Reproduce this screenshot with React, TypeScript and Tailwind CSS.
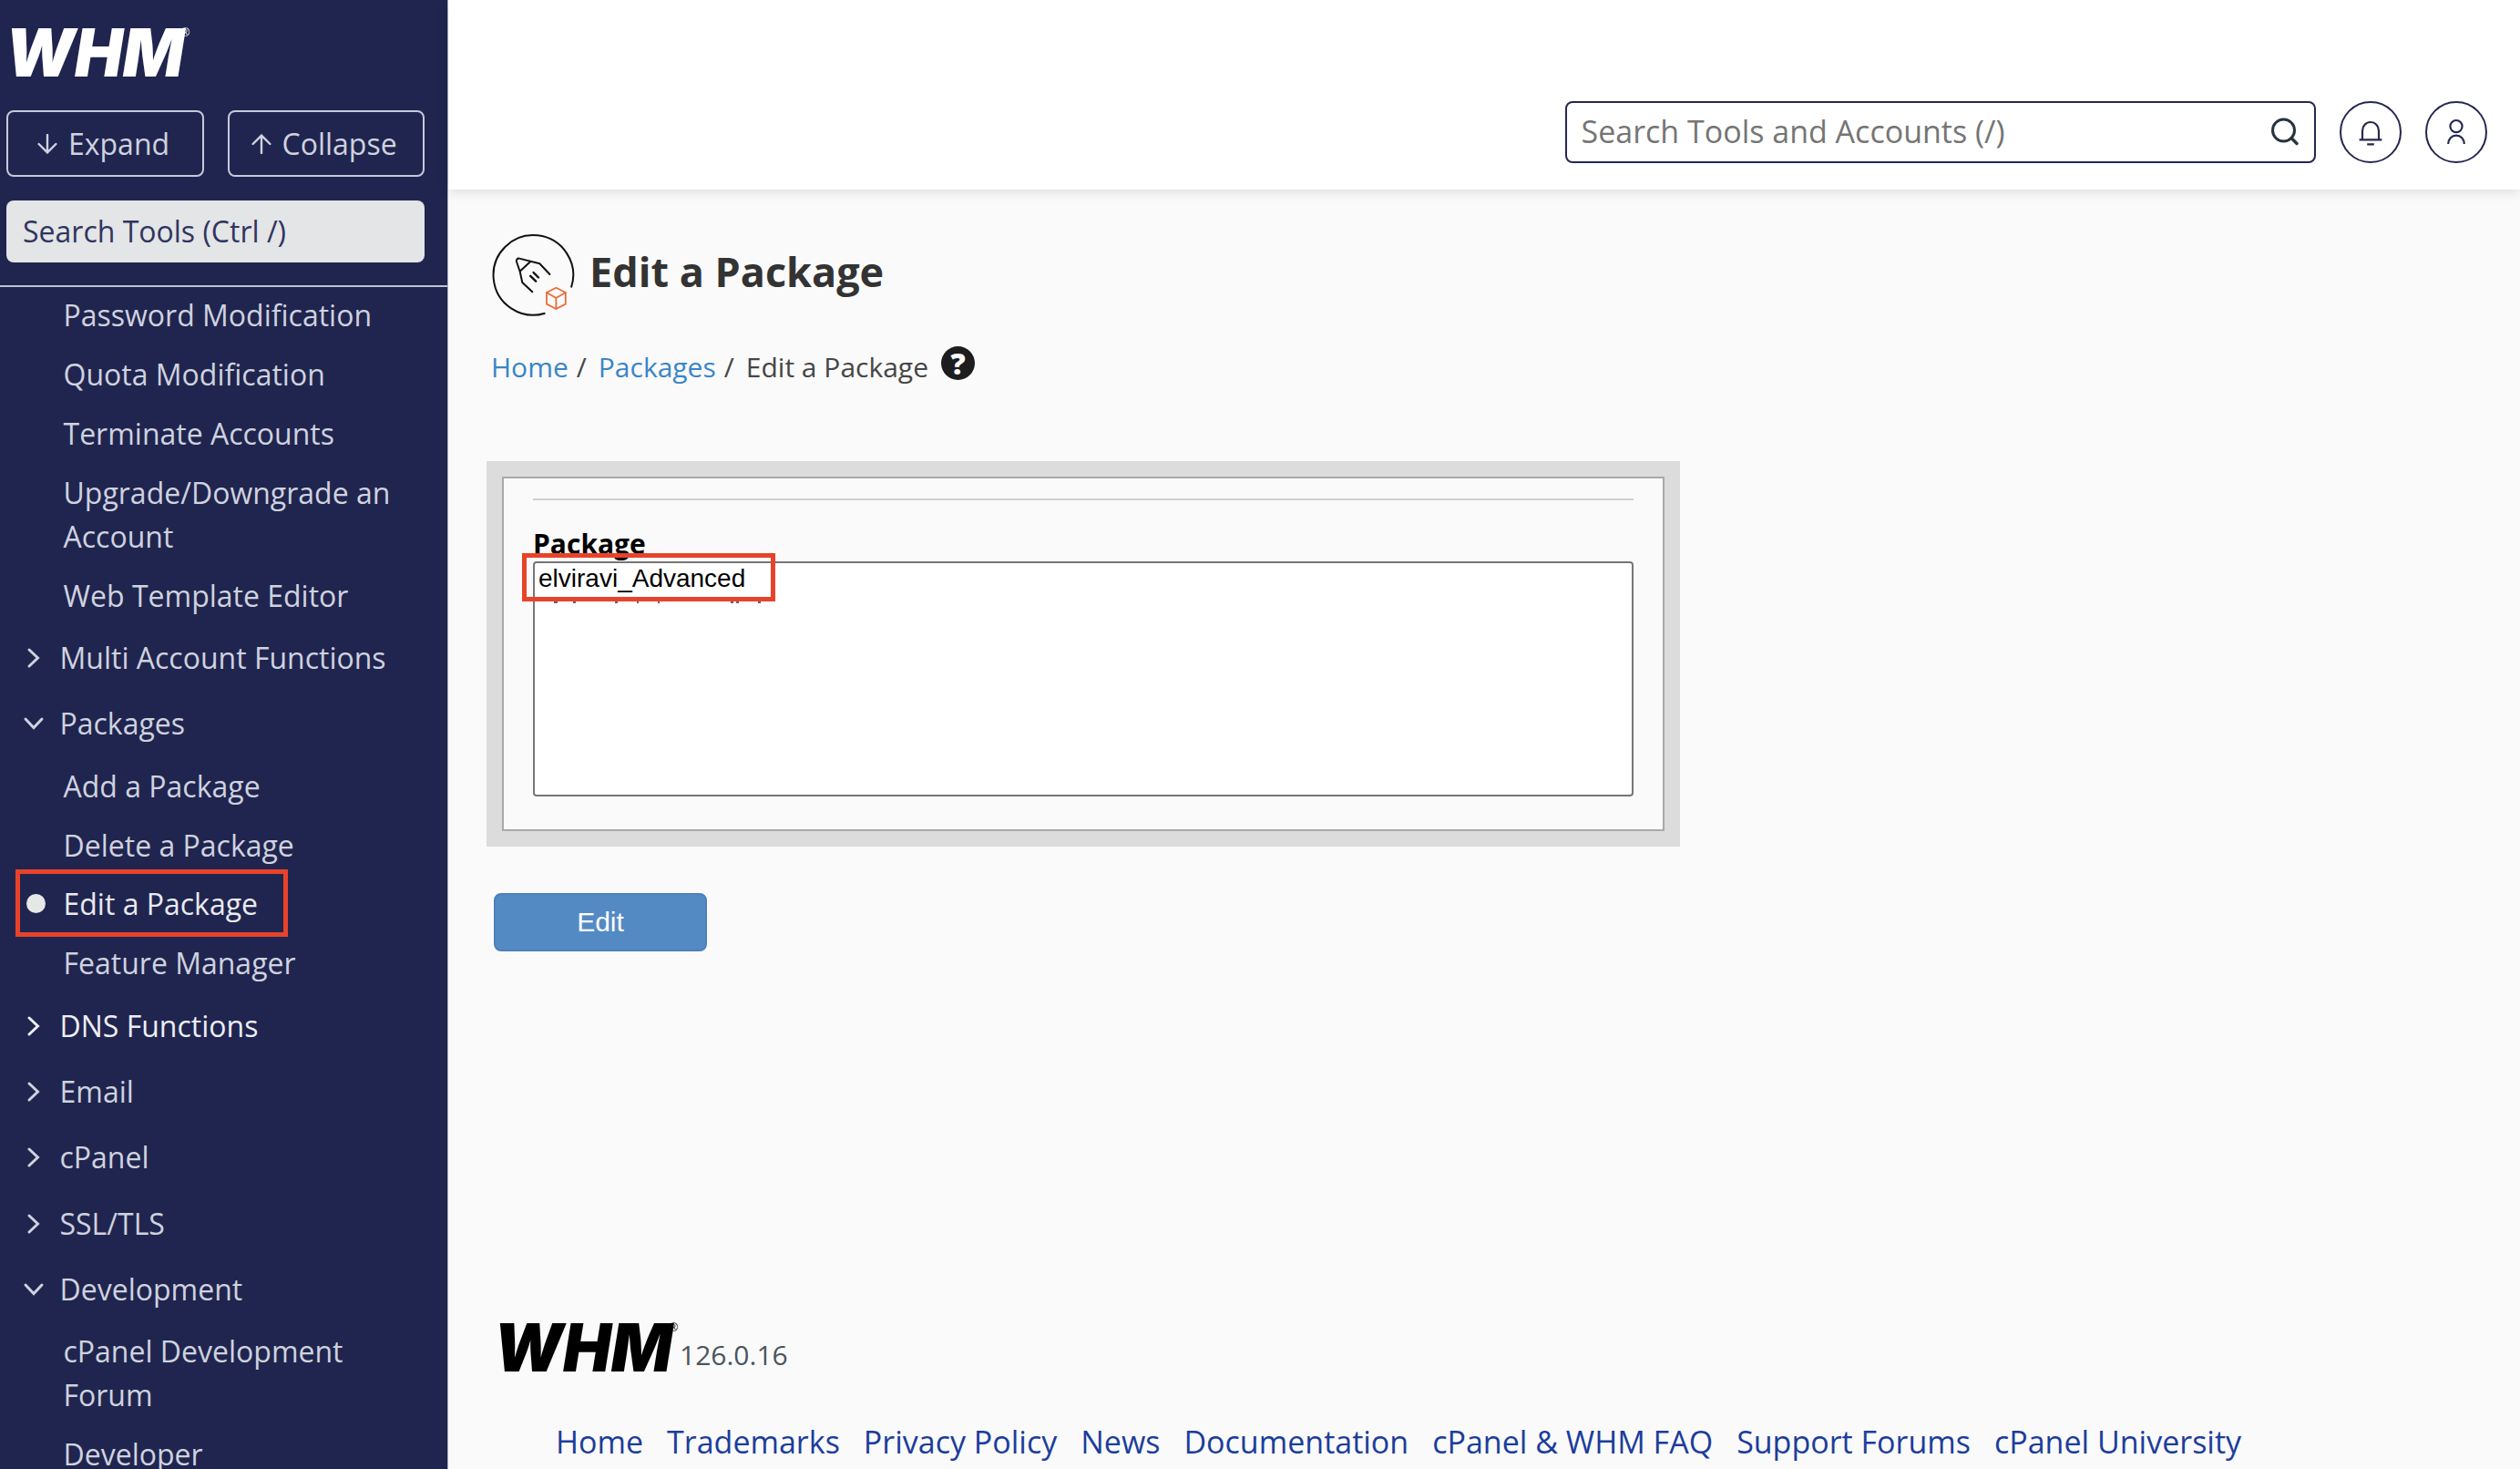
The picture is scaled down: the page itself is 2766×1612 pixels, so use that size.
import React from 'react';

interface NavLink {
  label: string;
  active?: boolean;
}

interface NavGroup {
  label: string;
  open?: boolean;
  highlighted?: boolean;
  items?: NavLink[];
}

const ACCOUNT_LINKS: NavLink[] = [
  { label: 'Password Modification' },
  { label: 'Quota Modification' },
  { label: 'Terminate Accounts' },
  { label: 'Upgrade/Downgrade an Account' },
  { label: 'Web Template Editor' },
];

const NAV_GROUPS: NavGroup[] = [
  { label: 'Multi Account Functions' },
  {
    label: 'Packages',
    open: true,
    items: [
      { label: 'Add a Package' },
      { label: 'Delete a Package' },
      { label: 'Edit a Package', active: true },
      { label: 'Feature Manager' },
    ],
  },
  { label: 'DNS Functions', highlighted: true },
  { label: 'Email' },
  { label: 'cPanel' },
  { label: 'SSL/TLS' },
  {
    label: 'Development',
    open: true,
    items: [{ label: 'cPanel Development Forum' }, { label: 'Developer Documentation' }],
  },
];

const FOOTER_LINKS = [
  'Home',
  'Trademarks',
  'Privacy Policy',
  'News',
  'Documentation',
  'cPanel & WHM FAQ',
  'Support Forums',
  'cPanel University',
];

const Logo: React.FC<{ className: string }> = ({ className }) => (
  <svg width="204" height="56" viewBox="0 0 204 56" className={className} fill="currentColor">
    <text
      x="0"
      y="54.5"
      fontFamily="Inter, sans-serif"
      fontSize="73"
      fontWeight="900"
      fontStyle="italic"
      textLength="196"
      lengthAdjust="spacingAndGlyphs"
    >
      WHM
    </text>
    <text x="192.5" y="11" fontFamily='"Liberation Sans", sans-serif' fontSize="13">
      ®
    </text>
  </svg>
);

const ArrowIcon: React.FC<{ up?: boolean }> = ({ up }) => (
  <svg width="22" height="22" viewBox="0 0 22 22" fill="none" stroke="currentColor" strokeWidth="2.4" strokeLinecap="round">
    {up ? <path d="M11 21V1.6M1.6 11L11 1.6L20.4 11" /> : <path d="M11 1V20.4M1.6 11L11 20.4L20.4 11" />}
  </svg>
);

const Chevron: React.FC<{ open?: boolean }> = ({ open }) => (
  <svg width="24" height="24" viewBox="0 0 24 24" fill="none" stroke="currentColor" strokeWidth="3" strokeLinecap="round">
    {open ? <path d="M3 7L12 16.5L21 7" /> : <path d="M7 3L16.5 12L7 21" />}
  </svg>
);

const PackageIcon = () => (
  <svg width="92" height="92" viewBox="539 256 92 92" fill="none" stroke="#111" strokeWidth="2" strokeLinecap="round" strokeLinejoin="round">
    <path d="M627 315.5A43.8 43.8 0 1 0 598.4 343.7" strokeLinecap="butt" />
    <path d="M603.4 301L592.3 289.3L570 283.6Q566.4 283.4 567 287.2L570.7 298L573.3 310L584.3 320.3" />
    <path d="M582 287.3L570.9 297.5" />
    <path d="M585.5 299L591 304.5M582.2 302.8L588.2 308.6" strokeWidth="2.4" />
    <g stroke="#ee6a3a" strokeWidth="1.8">
      <path d="M610.4 315.8L620.8 321V333.6L610.4 339L600 333.6V321Z" />
      <path d="M600 321L610.4 327L620.8 321M610.4 327V339" />
    </g>
  </svg>
);

const SubLink: React.FC<{ link: NavLink }> = ({ link }) => (
  <li className={`relative py-[8.4px] pr-8 pl-[69.5px] ${link.active ? 'text-[#e9eaf0]' : 'text-[#cfd2df]'}`}>
    {link.active && (
      <>
        <span className="absolute top-[21px] left-[29px] h-[21px] w-[21px] rounded-full bg-[#e6e8e8]" />
        <span className="absolute top-[-6px] left-[17px] h-[74px] w-[299px] border-[5px] border-[#e8432a]" />
      </>
    )}
    <a href="#">{link.label}</a>
  </li>
);

const Sidebar = () => (
  <aside className="flex h-full w-[492px] shrink-0 flex-col border-r border-[#a9abc0] bg-[#20254f] text-[32px] leading-[48px] text-[#cfd2df]">
    <div className="h-[121px] pt-[28.5px] pl-[6px]">
      <Logo className="text-white" />
    </div>
    <div className="flex gap-[26px] px-[7px]">
      <button className="flex h-[73px] w-[216.5px] items-center rounded-lg border-2 border-[#c6c9da] pl-[32px]">
        <ArrowIcon />
        <span className="ml-[12px]">Expand</span>
      </button>
      <button className="flex h-[73px] w-[216.5px] items-center rounded-lg border-2 border-[#c6c9da] pl-[24px]">
        <ArrowIcon up />
        <span className="ml-[12px]">Collapse</span>
      </button>
    </div>
    <div className="mt-[26px] ml-[7px] flex h-[68px] w-[459px] items-center rounded-lg bg-[#e3e5e6] pl-[18px] text-[#30355f]">
      Search Tools (Ctrl /)
    </div>
    <nav className="mt-[25px] min-h-0 flex-1 overflow-hidden border-t-2 border-[#bfc2d4]">
      <ul className="-mt-px">
        {ACCOUNT_LINKS.map((link) => (
          <SubLink key={link.label} link={link} />
        ))}
      </ul>
      {NAV_GROUPS.map((group) => (
        <div key={group.label}>
          <div className={`flex items-center py-[12.15px] pl-[24.5px] ${group.highlighted ? 'text-[#eceef4]' : ''}`}>
            <Chevron open={group.open} />
            <span className="ml-[17px]">{group.label}</span>
          </div>
          {group.items && (
            <ul>
              {group.items.map((link) => (
                <SubLink key={link.label} link={link} />
              ))}
            </ul>
          )}
        </div>
      ))}
    </nav>
  </aside>
);

const Header = () => (
  <header className="z-10 flex h-[208px] shrink-0 items-start justify-end bg-white pt-[110.5px] pr-[36px] text-[#24284f] shadow-[0_2px_12px_rgba(0,0,0,0.13)]">
    <div className="flex h-[68px] w-[824.5px] items-center justify-between rounded-lg border-2 border-[#24284f] pr-[16px] pl-[16px]">
      <span className="text-[34px] text-[#757575]">Search Tools and Accounts (/)</span>
      <svg width="32" height="32" viewBox="0 0 32 32" fill="none" stroke="#27343f" strokeWidth="3" strokeLinecap="round">
        <circle cx="14.5" cy="14" r="12" />
        <path d="M23 22.5L29 28.5" strokeWidth="3.4" />
      </svg>
    </div>
    <button className="ml-[26px] flex h-[68px] w-[68px] items-center justify-center rounded-full border-2 border-[#24284f]">
      <svg width="30" height="30" viewBox="0 0 30 30" fill="none" stroke="currentColor" strokeWidth="2.2">
        <path d="M2.6 23.4H27.4M6 23.4V13.5A9 9.5 0 0 1 24 13.5V23.4M11.2 28.4H18.8" />
      </svg>
    </button>
    <button className="ml-[26px] flex h-[68px] w-[68px] items-center justify-center rounded-full border-2 border-[#24284f]">
      <svg width="30" height="30" viewBox="0 0 30 30" fill="none" stroke="currentColor" strokeWidth="2.2">
        <circle cx="15" cy="8.6" r="6.6" />
        <path d="M6.2 28A8.8 9.4 0 0 1 23.8 28" />
      </svg>
    </button>
  </header>
);

const HelpIcon = () => (
  <span className="flex h-[37px] w-[37px] items-center justify-center rounded-full bg-[#1d1d1f] text-[32px] leading-none font-black text-white">
    ?
  </span>
);

const PackageForm = () => (
  <form className="mt-[71px] -ml-[8px] w-[1310px]">
    <div className="h-[423px] bg-[#dcdcdc] p-[17px]">
      <div className="h-full border-2 border-[#a9a9a9] bg-[#fafafa] px-[32px] pt-[22px]">
        <div className="h-[2px] bg-[#cfcfcf]" />
        <div className="relative mt-[26px] h-[41px] text-[30px] leading-[44px] font-bold text-black">Package</div>
        <div className="relative h-[258px] w-[1208px] rounded border-2 border-[#767676] bg-white pt-px pl-[4px] font-['Liberation_Sans',Arial,sans-serif] text-[28px] leading-[32px] text-black">
          elviravi_Advanced
          <span className="absolute top-[-11px] left-[-14px] h-[53px] w-[278px] border-[5px] border-[#e8432a]" />
          {/* Bottom edge of the row that sits under the selected option */}
          <svg className="absolute top-[42px] left-[20px]" width="230" height="2" viewBox="0 0 230 2" stroke="#333" strokeWidth="1.4">
            <path d="M1 1h4M22 1h3M68 1h3M92 1h2M115 1h2M195 1h3M201 1h3M225 1h3" />
          </svg>
        </div>
      </div>
    </div>
    <button
      type="button"
      className="mt-[51px] ml-[8px] h-[64px] w-[234px] rounded-lg border-2 border-[#4c80b8] bg-[#548ac4] pb-[2px] font-['Liberation_Sans',Arial,sans-serif] text-[30px] text-white"
    >
      Edit
    </button>
  </form>
);

const Footer = () => (
  <footer className="mt-auto pb-px">
    <div className="flex items-end">
      <Logo className="text-black" />
      <span className="text-[30px] leading-[38px] text-[#4a545e]">126.0.16</span>
    </div>
    <div className="mt-[47px] ml-[68px] flex gap-[26px] text-[34px] leading-[58px] whitespace-nowrap text-[#1c3d9c]">
      {FOOTER_LINKS.map((label) => (
        <a key={label} href="#">
          {label}
        </a>
      ))}
    </div>
  </footer>
);

const App: React.FC = () => {
  return (
    <div className="flex h-screen w-screen overflow-hidden bg-[#fafafa] font-['Open_Sans','Noto_Sans',sans-serif]">
      <Sidebar />
      <div className="flex min-w-0 flex-1 flex-col">
        <Header />
        <main className="flex min-h-0 flex-1 flex-col pt-[48px] pl-[50px]">
          <div className="-ml-[3px] flex h-[92px] items-center">
            <PackageIcon />
            <h1 className="ml-[16px] pb-[8px] text-[45px] leading-[60px] font-bold text-[#333]">Edit a Package</h1>
          </div>
          <div className="mt-[32px] -ml-[3px] flex h-[55px] text-[30px] leading-[46px] text-[#464646]">
            <a href="#" className="text-[#3a85c8]">Home</a>
            <span className="ml-[9px]">/</span>
            <a href="#" className="ml-[13px] text-[#3a85c8]">Packages</a>
            <span className="ml-[9px]">/</span>
            <span className="ml-[13px] mr-[14px]">Edit a Package</span>
            <HelpIcon />
          </div>
          <PackageForm />
          <Footer />
        </main>
      </div>
    </div>
  );
};

export default App;
